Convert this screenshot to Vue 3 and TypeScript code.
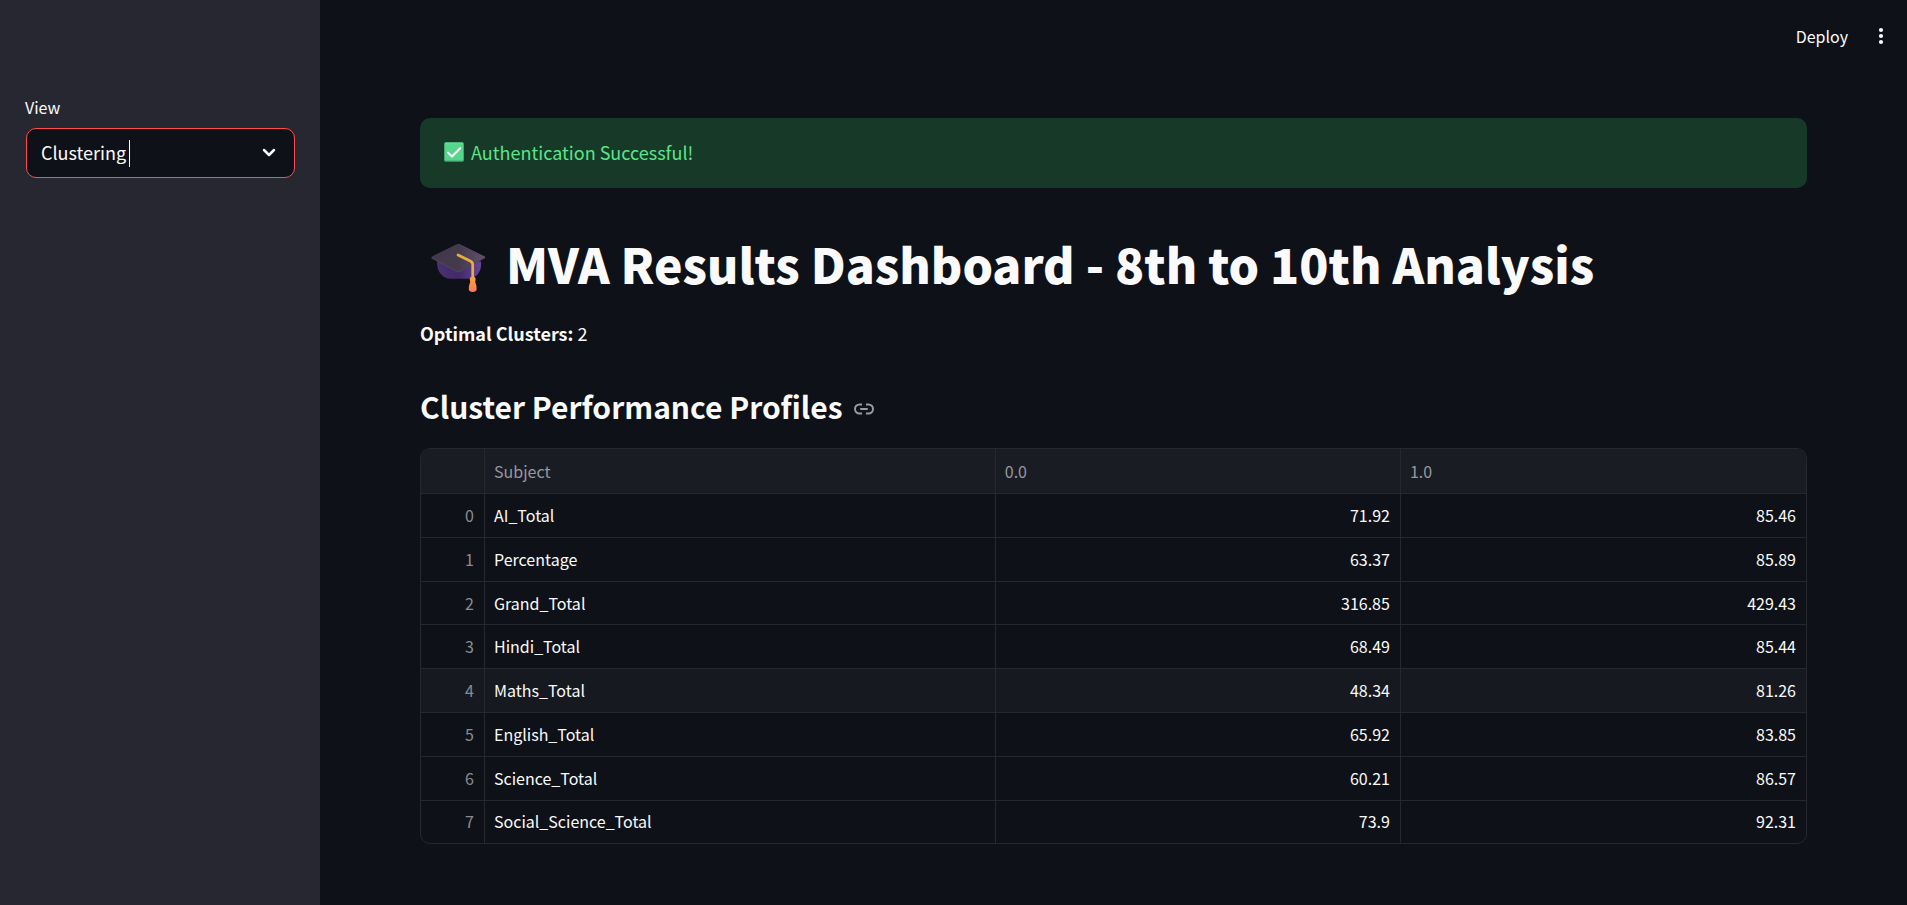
<script setup lang="ts">
import { ref } from 'vue'

interface ProfileRow {
  subject: string
  low: number
  high: number
}

const views: string[] = ['Clustering']
const view = ref<string>('Clustering')
const optimalClusters = 2
const activeRow = 4

const rows: ProfileRow[] = [
  { subject: 'AI_Total', low: 71.92, high: 85.46 },
  { subject: 'Percentage', low: 63.37, high: 85.89 },
  { subject: 'Grand_Total', low: 316.85, high: 429.43 },
  { subject: 'Hindi_Total', low: 68.49, high: 85.44 },
  { subject: 'Maths_Total', low: 48.34, high: 81.26 },
  { subject: 'English_Total', low: 65.92, high: 83.85 },
  { subject: 'Science_Total', low: 60.21, high: 86.57 },
  { subject: 'Social_Science_Total', low: 73.9, high: 92.31 },
]
</script>

<template>
  <div class="app">
    <aside class="sidebar">
      <label class="view-label" for="view">View</label>
      <div class="select-box">
        <select id="view" v-model="view">
          <option v-for="v in views" :key="v" :value="v">{{ v }}</option>
        </select>
        <span class="caret" aria-hidden="true"></span>
        <svg class="chevron" viewBox="0 0 14 10" aria-hidden="true">
          <path d="M2 2l5 5 5-5" />
        </svg>
      </div>
    </aside>

    <div class="page">
      <header class="toolbar">
        <button class="deploy" type="button">Deploy</button>
        <button class="menu" type="button" aria-label="Main menu">
          <svg viewBox="0 0 6 18" aria-hidden="true">
            <circle cx="3" cy="3" r="2.1" />
            <circle cx="3" cy="9" r="2.1" />
            <circle cx="3" cy="15" r="2.1" />
          </svg>
        </button>
      </header>

      <main class="content">
        <div class="alert" role="alert">
          <svg class="check" viewBox="0 0 20 20" aria-hidden="true">
            <defs>
              <linearGradient id="checkFill" x1="0" y1="0" x2="0" y2="1">
                <stop offset="0" stop-color="#5fe092" />
                <stop offset=".15" stop-color="#55d68c" />
                <stop offset=".88" stop-color="#57d68c" />
                <stop offset="1" stop-color="#3fa56c" />
              </linearGradient>
            </defs>
            <rect x=".3" y=".3" width="19.4" height="19.4" rx="1.5" fill="url(#checkFill)" />
            <path d="M4 10.6l4 3.9 8.2-8.3" fill="none" stroke="#fff" stroke-width="2" stroke-linecap="round" stroke-linejoin="round" />
          </svg>
          <span>Authentication Successful!</span>
        </div>

        <h1>
          <svg class="cap" viewBox="0 0 56 50" aria-hidden="true">
            <defs>
              <linearGradient id="capTop" x1="0" y1="0" x2="1" y2="0">
                <stop offset="0" stop-color="#40384a" />
                <stop offset=".5" stop-color="#443a4d" />
                <stop offset="1" stop-color="#62506f" />
              </linearGradient>
              <linearGradient id="capBase" x1="0" y1="0" x2="1" y2="0">
                <stop offset="0" stop-color="#4a3170" />
                <stop offset=".5" stop-color="#422a68" />
                <stop offset="1" stop-color="#65459a" />
              </linearGradient>
              <linearGradient id="tassel" x1="0" y1="0" x2="0" y2="1">
                <stop offset="0" stop-color="#f5a83f" />
                <stop offset=".5" stop-color="#fa9049" />
                <stop offset="1" stop-color="#ff7664" />
              </linearGradient>
            </defs>
            <path d="M6 19h45c1 8-3 14-7 16q-2 1.500-5 1.500H20q-4 0-7-2C8 31 6 26 6 19z" fill="url(#capBase)" />
            <path d="M1 16q-1.500-.9 0-1.800L26.500 1.600q1.500-.8 3 0L54.500 14q1.500.9 0 1.900L29.500 29.600q-1.500.8-3 0z" fill="#514359" />
            <path d="M1 14.800q-1-.7.500-1.400L26.500 1.300q1.500-.7 3 0L54.500 13.600q1 .7-.2 1.400L29.500 28.300q-1.500.8-3 0z" fill="url(#capTop)" />
            <path d="M27.500 12.200L40 18.400q2.500 1.200 2.500 3.600v14" fill="none" stroke="#e9ad3d" stroke-width="2.800" stroke-linecap="round" stroke-linejoin="round" />
            <path d="M39.500 37q0-2.500 3-2.500t3 2.500l-.5 2.500q1.800 4 1.500 8.500-1 2-4 2t-4-2q-.3-4.500 1.500-8.500z" fill="url(#tassel)" />
          </svg>
          <span>MVA Results Dashboard - 8th to 10th Analysis</span>
        </h1>

        <p class="optimal"><strong>Optimal Clusters:</strong> {{ optimalClusters }}</p>

        <h3 id="cluster-performance-profiles">
          <span>Cluster Performance Profiles</span>
          <a href="#cluster-performance-profiles" aria-label="Link to heading">
            <svg viewBox="0 0 20 12" aria-hidden="true">
              <path d="M8 1.500H5.500a4.500 4.500 0 0 0 0 9H8M12 1.500h2.500a4.500 4.500 0 0 1 0 9H12M6.200 6h7.600" />
            </svg>
          </a>
        </h3>

        <div class="table-frame">
          <table>
            <colgroup>
              <col class="col-index" />
              <col />
              <col class="col-value" />
              <col class="col-value" />
            </colgroup>
            <thead>
              <tr>
                <th scope="col" aria-label="Index"></th>
                <th scope="col">Subject</th>
                <th scope="col">0.0</th>
                <th scope="col">1.0</th>
              </tr>
            </thead>
            <tbody>
              <tr v-for="(row, i) in rows" :key="row.subject" :class="{ active: i === activeRow }">
                <td class="index">{{ i }}</td>
                <td>{{ row.subject }}</td>
                <td class="number">{{ row.low }}</td>
                <td class="number">{{ row.high }}</td>
              </tr>
            </tbody>
          </table>
        </div>
      </main>
    </div>
  </div>
</template>

<style>
body {
  background: #0e1117;
}
</style>

<style scoped>
.app {
  display: flex;
  min-height: 100vh;
  background: #0e1117;
  color: #fafafa;
  font-family: "Noto Sans CJK SC", "Noto Sans", sans-serif;
  font-size: 18px;
  line-height: 32px;
}

.sidebar {
  box-sizing: border-box;
  flex: 0 0 320px;
  padding: 93px 25px 0;
  background: #262730;
}

.view-label {
  display: block;
  margin-bottom: 7px;
  font-size: 16px;
  line-height: 28px;
}

.select-box {
  position: relative;
  margin-left: 1px;
}

select {
  display: block;
  box-sizing: border-box;
  width: 100%;
  height: 50px;
  padding: 0 40px 2px 14px;
  border: 1px solid #ff4b4b;
  border-radius: 10px;
  outline: none;
  appearance: none;
  background: #0e1117;
  color: #fafafa;
  font-family: inherit;
  font-size: 18px;
}

.caret {
  position: absolute;
  top: 12px;
  left: 103px;
  width: 1px;
  height: 27px;
  background: #fafafa;
}

.chevron {
  position: absolute;
  top: 20px;
  right: 19px;
  width: 14px;
  height: 10px;
  fill: none;
  stroke: #fafafa;
  stroke-width: 2.5;
  stroke-linecap: round;
  stroke-linejoin: round;
}

.page {
  flex: 1;
  min-width: 0;
}

.toolbar {
  display: flex;
  align-items: center;
  justify-content: flex-end;
  gap: 30px;
  height: 71px;
  padding-right: 23px;
}

.toolbar button {
  padding: 0;
  border: 0;
  background: none;
  color: inherit;
  font-family: inherit;
  font-size: 16px;
  line-height: 24px;
}

.menu svg {
  display: block;
  width: 6px;
  height: 18px;
  fill: #fafafa;
}

.content {
  padding: 47px 100px 60px;
}

.alert {
  display: flex;
  align-items: center;
  gap: 7px;
  padding: 18px 24px 20px;
  border-radius: 10px;
  background: #173928;
  color: #5ce488;
}

.check {
  width: 20px;
  height: 20px;
}

h1 {
  display: flex;
  align-items: flex-start;
  gap: 20px;
  margin: 42px 0 0;
  padding-left: 11px;
  font-size: 48px;
  font-weight: 900;
  line-height: 66px;
}

.cap {
  width: 55px;
  height: 49px;
  margin-top: 13px;
}

.optimal {
  margin: 21px 0 0;
}

h3 {
  display: flex;
  align-items: center;
  gap: 11px;
  margin: 36px 0 21px;
  font-size: 30px;
  font-weight: 700;
  line-height: 42px;
}

h3 a {
  padding-top: 6px;
}

h3 svg {
  display: block;
  width: 20px;
  height: 12px;
  fill: none;
  stroke: #9b9ca0;
  stroke-width: 2;
}

.table-frame {
  overflow: hidden;
  border: 1px solid #26282e;
  border-radius: 10px;
}

table {
  width: 100%;
  height: 394px;
  border-spacing: 0;
  table-layout: fixed;
  font-size: 16px;
  line-height: 24px;
}

.col-index {
  width: 64px;
}

.col-value {
  width: 29.25%;
}

th,
td {
  padding: 0 10px 1px 9px;
  border-right: 1px solid #26282e;
  border-bottom: 1px solid #26282e;
  text-align: left;
}

th {
  height: 43px;
  background: #1a1c24;
  color: #97989d;
  font-weight: 400;
}

th:last-child,
td:last-child {
  border-right: 0;
}

tbody tr:last-child td {
  border-bottom: 0;
}

.active td {
  background: #16191f;
}

td.index {
  color: #8b8c91;
  text-align: right;
}

td.number {
  text-align: right;
}
</style>
